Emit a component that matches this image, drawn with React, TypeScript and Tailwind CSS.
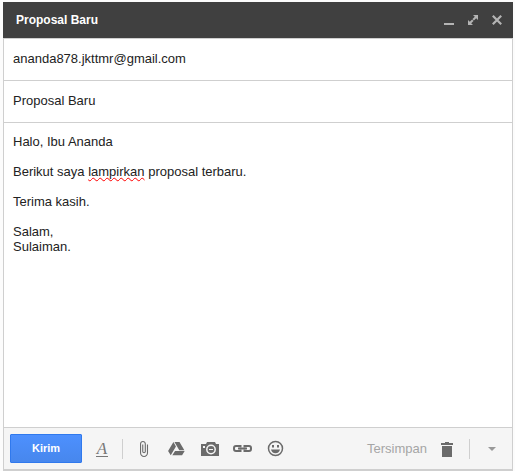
import React, { useState } from "react";

const iconButton =
  "flex h-[29px] w-[33px] shrink-0 items-center justify-center text-[#6b6b6b]";

const Divider = () => <div className="h-5 w-px shrink-0 bg-[#cfcfcf]" />;

const TitleBar = ({ title }: { title: string }) => (
  <header className="flex h-9 items-center justify-between bg-[#404040] pr-1 pl-[13px]">
    <h1 className="text-xs font-bold text-white">{title}</h1>
    <div className="flex text-[#b4b4b4]">
      <button type="button" aria-label="Minimalkan" className="flex h-6 w-6 items-center justify-center">
        <svg width="16" height="16" viewBox="0 0 16 16" fill="currentColor">
          <path d="M3 11h10v2H3z" />
        </svg>
      </button>
      <button type="button" aria-label="Layar penuh" className="flex h-6 w-6 items-center justify-center">
        <svg width="16" height="16" viewBox="0 0 16 16" fill="currentColor">
          <path d="M8 3h5v5l-1.8-1.8-2.3 2.3-1.4-1.4 2.3-2.3zM8 13H3V8l1.8 1.8 2.3-2.3 1.4 1.4-2.3 2.3z" />
        </svg>
      </button>
      <button type="button" aria-label="Tutup" className="flex h-6 w-6 items-center justify-center">
        <svg width="16" height="16" viewBox="0 0 16 16" fill="none" stroke="currentColor" strokeWidth="2.2">
          <path d="M3.8 3.8l8.4 8.4M12.2 3.8l-8.4 8.4" />
        </svg>
      </button>
    </div>
  </header>
);

const Toolbar = () => (
  <footer className="flex items-center border-t border-[#cfcfcf] bg-[#f5f5f5] py-1.5 pr-0.5 pl-1.5">
    <button
      type="submit"
      className="h-[29px] w-[72px] shrink-0 rounded-[1px] border border-[#3079ed] bg-gradient-to-b from-[#4d90fe] to-[#4787ed] text-[11px] font-bold text-white"
    >
      Kirim
    </button>
    <button
      type="button"
      aria-label="Opsi pemformatan"
      className="flex h-[29px] w-10 shrink-0 items-center justify-center text-[#777]"
    >
      <span className="border-b border-[#777] px-px font-['Liberation_Serif',serif] text-[17px] leading-[15px] italic">
        A
      </span>
    </button>
    <Divider />
    <div className="ml-1 flex">
      <button type="button" aria-label="Lampirkan file" className={iconButton}>
        <svg width="19" height="19" viewBox="0 0 19 19" fill="currentColor">
          <path
            transform="translate(.9 1.2) scale(.73)"
            d="M16.5 6v11.5c0 2.21-1.79 4-4 4s-4-1.79-4-4V5a2.5 2.5 0 0 1 5 0v10.5c0 .55-.45 1-1 1s-1-.45-1-1V6H10v9.5a2.5 2.5 0 0 0 5 0V5c0-2.21-1.79-4-4-4S7 2.79 7 5v12.5c0 3.04 2.46 5.5 5.5 5.5s5.5-2.46 5.5-5.5V6h-1.5z"
          />
        </svg>
      </button>
      <button type="button" aria-label="Sisipkan dari Drive" className={iconButton}>
        <svg width="19" height="19" viewBox="0 0 19 19" fill="currentColor">
          <path
            transform="translate(.5 .8) scale(.74)"
            d="M8 3L.8 15l3.6 6 7-12zM10.2 15L6.5 21h13.2l3.5-6zM22.8 14L16.2 3H9.4l6.5 11z"
          />
        </svg>
      </button>
      <button type="button" aria-label="Sisipkan foto" className={iconButton}>
        <svg width="19" height="19" viewBox="0 0 19 19">
          <path fill="currentColor" d="M1 5h5l1-2h8l1 2h3v12H1z" />
          <circle cx="11" cy="10.5" r="4.2" fill="none" stroke="#f5f5f5" strokeWidth="1.5" />
          <path fill="#f5f5f5" d="M3 7h2v2H3zM9 10h4v1H9z" />
        </svg>
      </button>
      <button type="button" aria-label="Sisipkan link" className={iconButton}>
        <svg width="19" height="19" viewBox="0 0 19 19" fill="none" stroke="currentColor" strokeWidth="2">
          <path d="M7.5 8.2V7H3A2 2 0 0 0 1 9v1a2 2 0 0 0 2 2h4.500v-1.200M11.500 8.200V7H16a2 2 0 0 1 2 2v1a2 2 0 0 1-2 2h-4.500v-1.200M5 9.500h9" />
        </svg>
      </button>
      <button type="button" aria-label="Sisipkan emoji" className={iconButton}>
        <svg width="19" height="19" viewBox="0 0 19 19">
          <circle cx="9.5" cy="9.5" r="7" fill="none" stroke="currentColor" strokeWidth="1.5" />
          <path fill="currentColor" d="M6 6h2v2.5H6zM11 6h2v2.5h-2zM5 10.5h9a4.6 4.6 0 0 1-9 0z" />
        </svg>
      </button>
    </div>
    <span className="ml-auto text-[13px] text-[#a5a5a5]">Tersimpan</span>
    <button type="button" aria-label="Hapus draf" className="ml-[3px] flex h-[29px] w-[33px] shrink-0 items-center justify-center text-[#6b6b6b]">
      <svg width="19" height="19" viewBox="0 0 19 19" fill="currentColor">
        <path d="M8 3h4v1h4v2H4V4h4zM5 7h10v11H5z" />
      </svg>
    </button>
    <div className="ml-1.5 flex shrink-0 items-center">
      <Divider />
      <button type="button" aria-label="Opsi lainnya" className="ml-1 flex h-[29px] w-9 items-center justify-center text-[#999]">
        <svg width="8" height="4" viewBox="0 0 8 4" fill="currentColor">
          <path d="M0 0h8L4 4z" />
        </svg>
      </button>
    </div>
  </footer>
);

export default function App() {
  const [to, setTo] = useState("ananda878.jkttmr@gmail.com");
  const [subject, setSubject] = useState("Proposal Baru");

  return (
    <div className="flex min-h-screen flex-col bg-[#fcfcfc] pt-0.5 pr-0.5 pl-[3px] font-['Liberation_Sans',Arial,sans-serif] text-[13px] text-[#222]">
      <form
        className="flex grow flex-col border-b-2 border-[#cfcfcf]"
        onSubmit={(e) => e.preventDefault()}
      >
        <TitleBar title={subject} />
        <div className="flex grow flex-col border-x border-t border-[#cfcfcf] bg-white">
          <input
            type="email"
            aria-label="Kepada"
            value={to}
            onChange={(e) => setTo(e.target.value)}
            className="h-[42px] w-full border-b border-[#cfcfcf] px-[9px] pb-0.5 outline-none"
          />
          <input
            type="text"
            aria-label="Subjek"
            value={subject}
            onChange={(e) => setSubject(e.target.value)}
            className="h-[42px] w-full border-b border-[#cfcfcf] px-[9px] pb-0.5 outline-none"
          />
          <div
            role="textbox"
            aria-label="Isi pesan"
            aria-multiline="true"
            contentEditable
            suppressContentEditableWarning
            spellCheck={false}
            className="flex grow flex-col gap-[15px] px-[9px] py-[11px] leading-[15px] outline-none"
          >
            <p>Halo, Ibu Ananda</p>
            <p>
              Berikut saya{" "}
              <span className="underline decoration-[#f00] decoration-wavy decoration-1 underline-offset-1 [text-decoration-skip-ink:none]">
                lampirkan
              </span>{" "}
              proposal terbaru.
            </p>
            <p>Terima kasih.</p>
            <p>
              Salam,
              <br />
              Sulaiman.
            </p>
          </div>
          <Toolbar />
        </div>
      </form>
    </div>
  );
}
